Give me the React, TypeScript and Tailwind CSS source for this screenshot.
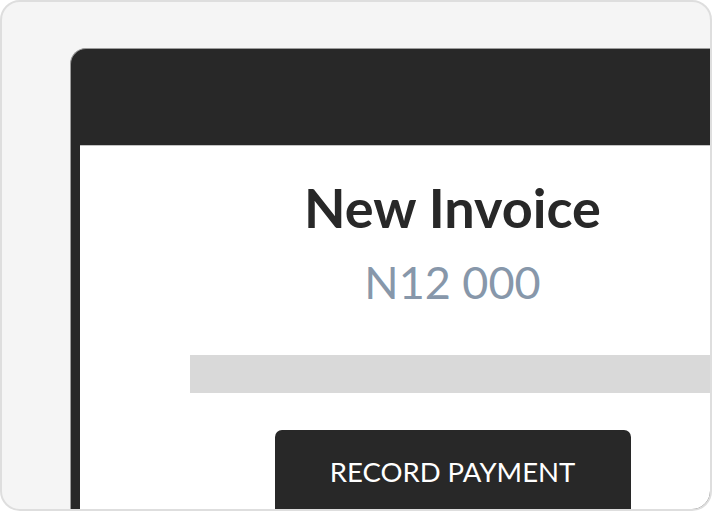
export default function App() {
  return (
    <div className="w-[713px] h-[512px] bg-white overflow-hidden" style={{ fontFamily: "Lato, 'Noto Sans', sans-serif" }}>
      <div className="w-[712px] h-[511px] rounded-[20px] border-2 border-[#dedede] bg-[#f5f5f5] overflow-hidden pl-[68px] pt-[46px]">
        <div className="w-[767px] h-[600px] bg-[#282828] rounded-tl-[16px] rounded-tr-[16px] border-t border-l border-[#9c9c9c] flex flex-col">
          <div className="h-[96px] shrink-0" />
          <div className="ml-[9px] mr-[12px] flex-1 bg-white border-t border-[#c4c4c4] flex flex-col items-center pt-[30px]">
            <div className="text-[54px] leading-[64px] font-bold text-[#282828]">New Invoice</div>
            <div className="mt-[16px] text-[45px] leading-[52px] text-[#8797aa]">N12 000</div>
            <div className="mt-[47px] w-[525px] h-[38px] bg-[#d9d9d9]" />
            <div className="mt-[37px] w-[356px] h-[100px] rounded-[7px] bg-[#282828] text-white text-center pt-[25px]">
              <span className="text-[27.5px] leading-[34px]">RECORD PAYMENT</span>
            </div>
          </div>
        </div>
      </div>
    </div>
  );
}
